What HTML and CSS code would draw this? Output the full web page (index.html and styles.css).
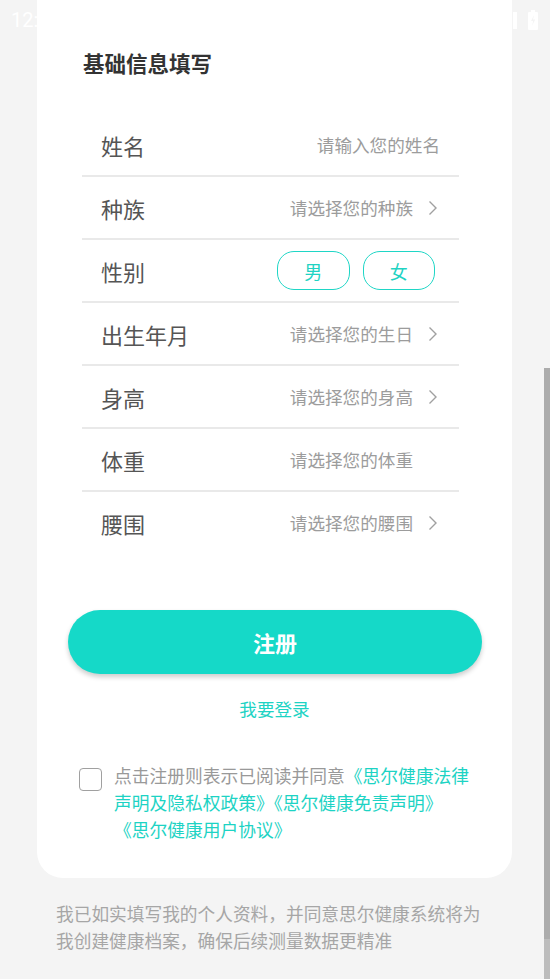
FILE: index.html
```html
<!DOCTYPE html>
<html lang="zh-CN">
<head>
<meta charset="utf-8">
<title>基础信息填写</title>
<link rel="stylesheet" href="styles.css">
</head>
<body>
<div class="statusbar">
  <span class="clock">12:00</span>
  <span class="sb-right">
    <span class="signal"></span>
    <svg class="battery" width="10" height="20" viewBox="0 0 10 20"><rect x="3" y="0" width="4" height="2" fill="#fff"/><rect x="0" y="2" width="10" height="18" rx="1" fill="#fff"/><path d="M6 5 L3 11 H5.2 L4 16 L7.2 9.5 H5 Z" fill="#f4f4f4"/></svg>
  </span>
</div>
<main class="page">
  <section class="card">
    <h1 class="title">基础信息填写</h1>
    <div class="rows">
      <div class="row">
        <span class="label">姓名</span>
        <span class="value input">请输入您的姓名</span>
      </div>
      <div class="row">
        <span class="label">种族</span>
        <span class="value">请选择您的种族</span>
        <svg class="chev" width="10" height="16" viewBox="0 0 10 16"><path d="M1.5 1.5 L8 8 L1.5 14.5" fill="none" stroke="#a0a0a0" stroke-width="1.4"/></svg>
      </div>
      <div class="row">
        <span class="label">性别</span>
        <span class="pills"><span class="pill">男</span><span class="pill">女</span></span>
      </div>
      <div class="row">
        <span class="label">出生年月</span>
        <span class="value">请选择您的生日</span>
        <svg class="chev" width="10" height="16" viewBox="0 0 10 16"><path d="M1.5 1.5 L8 8 L1.5 14.5" fill="none" stroke="#a0a0a0" stroke-width="1.4"/></svg>
      </div>
      <div class="row">
        <span class="label">身高</span>
        <span class="value">请选择您的身高</span>
        <svg class="chev" width="10" height="16" viewBox="0 0 10 16"><path d="M1.5 1.5 L8 8 L1.5 14.5" fill="none" stroke="#a0a0a0" stroke-width="1.4"/></svg>
      </div>
      <div class="row">
        <span class="label">体重</span>
        <span class="value">请选择您的体重</span>
        <svg class="chev hidden" width="10" height="16" viewBox="0 0 10 16"><path d="M1.5 1.5 L8 8 L1.5 14.5" fill="none" stroke="#a0a0a0" stroke-width="1.4"/></svg>
      </div>
      <div class="row">
        <span class="label">腰围</span>
        <span class="value">请选择您的腰围</span>
        <svg class="chev" width="10" height="16" viewBox="0 0 10 16"><path d="M1.5 1.5 L8 8 L1.5 14.5" fill="none" stroke="#a0a0a0" stroke-width="1.4"/></svg>
      </div>
    </div>
    <button class="submit">注册</button>
    <div class="login">我要登录</div>
    <div class="agree">
      <span class="checkbox"></span>
      <p class="agree-text">点击注册则表示已阅读并同意<span class="link">《思尔健康法律<br>声明及隐私权政策》《思尔健康免责声明》<br>《思尔健康用户协议》</span></p>
    </div>
  </section>
  <p class="footer">我已如实填写我的个人资料，并同意思尔健康系统将为我创建健康档案，确保后续测量数据更精准</p>
</main>
<div class="scrollbar"><span class="thumb"></span><span class="track"></span></div>
</body>
</html>
```
FILE: styles.css
```css
html {
  background: #f4f4f4;
}
body {
  margin: 0;
  background: #f4f4f4;
  font-family: "Noto Sans CJK SC", "Noto Sans", sans-serif;
  height: 979px;
  overflow: hidden;
  position: relative;
}
.statusbar {
  position: absolute;
  top: 0;
  left: 0;
  right: 0;
  height: 40px;
  display: flex;
  justify-content: space-between;
  align-items: center;
  padding: 0 12px 0 11px;
  z-index: 0;
}
.clock {
  font-family: Roboto, sans-serif;
  color: #fff;
  font-size: 20px;
  line-height: 20px;
}
.sb-right {
  display: flex;
  align-items: center;
  gap: 11px;
}
.signal {
  width: 4px;
  height: 17px;
  background: #fff;
}
.battery {
  display: block;
}
.page {
  position: relative;
  z-index: 1;
}
.card {
  background: #fff;
  margin: -30px 38px 0 37px;
  border-radius: 26px;
  padding: 78px 0 35px;
}
.title {
  margin: 0 0 36px 46px;
  font-size: 21.5px;
  line-height: 30px;
  font-weight: 600;
  color: #333;
}
.rows {
  margin: 0 53px 0 45px;
}
.row {
  height: 61px;
  border-bottom: 2px solid #e9e9e9;
  display: flex;
  align-items: center;
  padding: 0 19px 0 19px;
}
.row:last-child {
  border-bottom-color: transparent;
}
.label {
  font-size: 22px;
  color: #555;
  flex: 1;
}
.value {
  font-size: 17.6px;
  color: #9c9c9c;
}
.chev {
  display: block;
  margin-left: 15px;
  margin-right: 2px;
}
.chev.hidden {
  visibility: hidden;
}
.pills {
  display: flex;
  gap: 13px;
  margin-right: 5px;
}
.pill {
  box-sizing: border-box;
  width: 72.5px;
  height: 38.5px;
  border: 1.6px solid #1fd6c6;
  border-radius: 17px;
  color: #1fd3c3;
  font-size: 18px;
  display: flex;
  align-items: center;
  justify-content: center;
}
.submit {
  display: block;
  width: 414px;
  height: 64px;
  margin: 55px 0 0 31px;
  border: none;
  border-radius: 32px;
  background: #15d9c8;
  color: #fff;
  font-family: "Noto Sans CJK SC", sans-serif;
  font-size: 22px;
  font-weight: 600;
  box-shadow: 0 3px 5px rgba(0, 0, 0, 0.2);
}
.login {
  margin-top: 23px;
  text-align: center;
  font-size: 17.6px;
  line-height: 24px;
  color: #1dd3c4;
}
.agree {
  display: flex;
  align-items: flex-start;
  margin: 41px 0 0 42px;
  gap: 12px;
}
.checkbox {
  flex: none;
  width: 21px;
  height: 21px;
  border: 1.5px solid #a0a0a0;
  border-radius: 4px;
  margin-top: 6px;
}
.agree-text {
  margin: 0;
  font-size: 17.75px;
  line-height: 27px;
  color: #999;
}
.link {
  color: #1dd3c4;
}
.footer {
  margin: 22px 56px 0 56px;
  font-size: 17.7px;
  line-height: 27px;
  color: #a6a6a6;
}
.scrollbar {
  position: absolute;
  right: 0;
  top: 368px;
  width: 6px;
  bottom: 0;
  display: flex;
  flex-direction: column;
  z-index: 2;
}
.thumb {
  height: 571px;
  background: #acacac;
}
.track {
  flex: 1;
  background: #bdbdbd;
}
```
